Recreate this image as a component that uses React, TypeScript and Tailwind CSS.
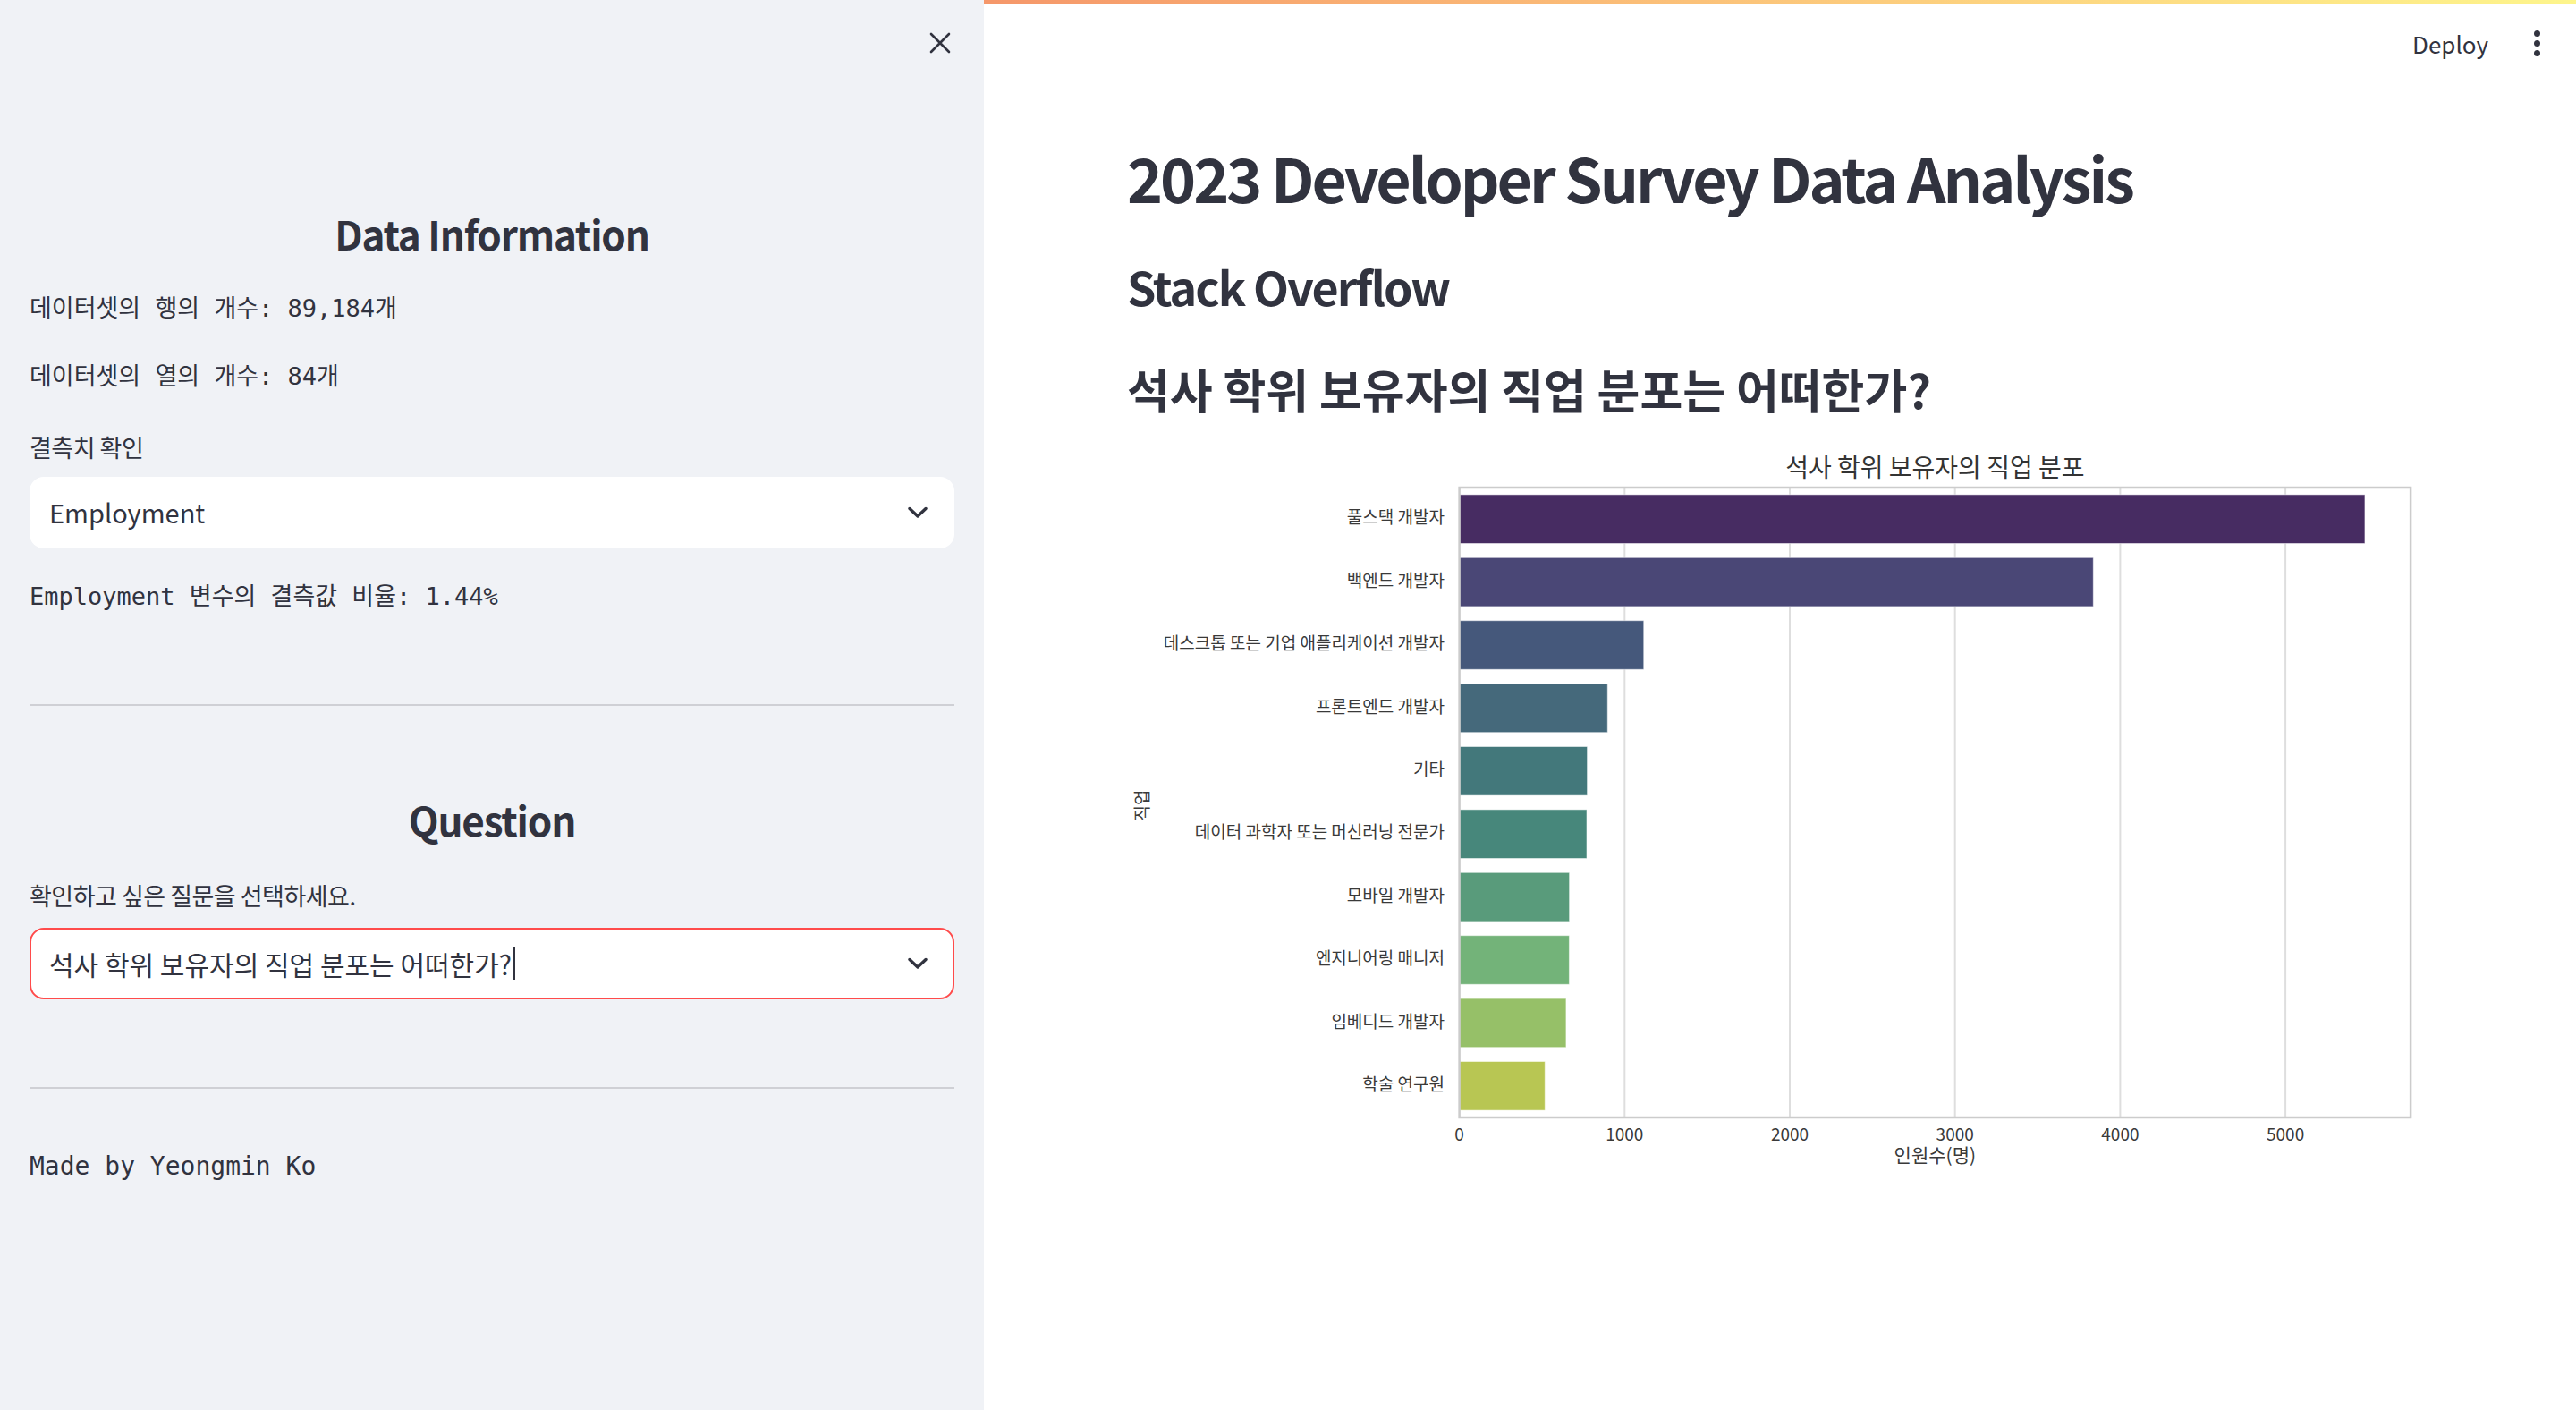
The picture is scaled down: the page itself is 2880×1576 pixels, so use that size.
const jobs: [string, number, string][] = [
  ["풀스택 개발자", 5481, "#472c62"],
  ["백엔드 개발자", 3837, "#4a4776"],
  ["데스크톱 또는 기업 애플리케이션 개발자", 1116, "#45587b"],
  ["프론트엔드 개발자", 897, "#45697b"],
  ["기타", 774, "#43787b"],
  ["데이터 과학자 또는 머신러닝 전문가", 771, "#47877b"],
  ["모바일 개발자", 666, "#599b7b"],
  ["엔지니어링 매니저", 665, "#73b379"],
  ["임베디드 개발자", 646, "#96c068"],
  ["학술 연구원", 518, "#b8c653"],
];

// chart geometry, in px inside the svg
const AX = 371.6;
const AY = 55;
const AW = 1063.5;
const AH = 704;
const PER = 0.1847;
const ROW = AH / jobs.length;
const chartFont = "'Noto Sans CJK KR', 'Noto Sans', sans-serif";

function Chevron() {
  return (
    <svg width="22" height="14" viewBox="0 0 22 14" fill="none">
      <path d="M2 2.5 L11 11 L20 2.5" stroke="#31333f" strokeWidth="3.4" strokeLinecap="round" strokeLinejoin="round" />
    </svg>
  );
}

function JobChart() {
  return (
    <svg width="1500" height="840" viewBox="0 0 1500 840" className="block">
      <text x={AX + AW / 2} y={35} textAnchor="middle" dominantBaseline="middle" fontSize="28" fill="#333333" fontFamily={chartFont}>
        석사 학위 보유자의 직업 분포
      </text>
      {[1000, 2000, 3000, 4000, 5000].map((v) => (
        <line key={v} x1={AX + v * PER} x2={AX + v * PER} y1={AY} y2={AY + AH} stroke="#dedede" strokeWidth="2" />
      ))}
      {jobs.map(([name, v, color], i) => {
        const cy = AY + ROW * (i + 0.5);
        return (
          <g key={name}>
            <rect x={AX} y={cy - 27.3} width={v * PER} height={54.6} fill={color} stroke="#ffffff" strokeOpacity="0.5" strokeWidth="1" />
            <text x={355} y={cy} textAnchor="end" dominantBaseline="middle" fontSize="19" fill="#3a3a3a" fontFamily={chartFont}>
              {name}
            </text>
          </g>
        );
      })}
      <rect x={AX} y={AY} width={AW} height={AH} fill="none" stroke="#cccccc" strokeWidth="2.5" />
      {[0, 1000, 2000, 3000, 4000, 5000].map((v) => (
        <text key={v} x={AX + v * PER} y={780} textAnchor="middle" dominantBaseline="middle" fontSize="19" fill="#3a3a3a" fontFamily={chartFont}>
          {v}
        </text>
      ))}
      <text x={AX + AW / 2} y={803} textAnchor="middle" dominantBaseline="middle" fontSize="21" fill="#3a3a3a" fontFamily={chartFont}>
        인원수(명)
      </text>
      <text x={19} y={410} textAnchor="middle" dominantBaseline="middle" fontSize="19" fill="#3a3a3a" fontFamily={chartFont} transform="rotate(-90 19 410)">
        직업
      </text>
    </svg>
  );
}

export default function App() {
  return (
    <div className="flex h-[1576px] w-[2880px] overflow-hidden bg-white font-['Noto_Sans_CJK_KR','Noto_Sans',sans-serif] text-[#31333f]">
      <aside className="relative flex w-[1100px] shrink-0 flex-col bg-[#f0f2f6] px-[33px]">
        <button className="absolute left-[1037px] top-[34px] flex h-[28px] w-[28px] items-center justify-center">
          <svg width="24" height="24" viewBox="0 0 24 24" fill="none">
            <path d="M2 2 L22 22 M22 2 L2 22" stroke="#31333f" strokeWidth="2.6" strokeLinecap="round" />
          </svg>
        </button>

        <h2 className="mt-[233px] text-center text-[44px] font-bold leading-[56px] tracking-[-1.2px]">Data Information</h2>
        <p className="mt-[36px] font-['DejaVu_Sans_Mono','Noto_Sans_CJK_KR',monospace] text-[27px] leading-[40px]">
          데이터셋의 행의 개수: 89,184개
        </p>
        <p className="mt-[36px] font-['DejaVu_Sans_Mono','Noto_Sans_CJK_KR',monospace] text-[27px] leading-[40px]">
          데이터셋의 열의 개수: 84개
        </p>
        <label className="mt-[41px] text-[27px] leading-[36px] tracking-[-0.5px]">결측치 확인</label>
        <div className="mt-[15px] flex h-[80px] items-center justify-between rounded-[16px] bg-white pl-[22px] pr-[30px]">
          <span className="text-[29px]">Employment</span>
          <Chevron />
        </div>
        <p className="mt-[34px] font-['DejaVu_Sans_Mono','Noto_Sans_CJK_KR',monospace] text-[27px] leading-[40px]">
          Employment 변수의 결측값 비율: 1.44%
        </p>
        <hr className="mt-[100px] h-[2px] border-0 bg-[#cfd0d5]" />

        <h2 className="mt-[99px] text-center text-[44px] font-bold leading-[56px] tracking-[-1.2px]">Question</h2>
        <label className="mt-[39px] text-[27px] leading-[36px] tracking-[-0.5px]">확인하고 싶은 질문을 선택하세요.</label>
        <div className="mt-[18px] flex h-[80px] items-center justify-between rounded-[16px] border-2 border-[#ff4b4b] bg-white pl-[20px] pr-[28px]">
          <div className="flex items-center">
            <span className="text-[30px]">석사 학위 보유자의 직업 분포는 어떠한가?</span>
            <span className="ml-[2px] h-[36px] w-[2px] bg-[#31333f]" />
          </div>
          <Chevron />
        </div>
        <hr className="mt-[98px] h-[2px] border-0 bg-[#cfd0d5]" />
        <p className="mt-[67px] font-['DejaVu_Sans_Mono','Noto_Sans_CJK_KR',monospace] text-[28px] leading-[40px]">
          Made by Yeongmin Ko
        </p>
      </aside>

      <main className="flex flex-1 flex-col">
        <div className="h-[4px] bg-gradient-to-r from-[#f5976a] to-[#fdf58c]" />
        <header className="flex h-[88px] items-center justify-end gap-[51px] pr-[40px]">
          <span className="text-[26px]">Deploy</span>
          <div className="flex flex-col items-center gap-[4px]">
            <span className="h-[7px] w-[7px] rounded-full bg-[#31333f]" />
            <span className="h-[7px] w-[7px] rounded-full bg-[#31333f]" />
            <span className="h-[7px] w-[7px] rounded-full bg-[#31333f]" />
          </div>
        </header>

        <div className="flex flex-col pl-[160px]">
          <h1 className="mt-[62px] text-[68px] font-bold leading-[88px] tracking-[-3px]">
            2023 Developer Survey Data Analysis
          </h1>
          <h2 className="mt-[45px] text-[52px] font-bold leading-[66px] tracking-[-2px]">Stack Overflow</h2>
          <h3 className="mt-[51px] text-[52px] font-bold leading-[62px]">
            석사 학위 보유자의 직업 분포는 어떠한가?
          </h3>
          <div className="mt-[24px]">
            <JobChart />
          </div>
        </div>
      </main>
    </div>
  );
}
